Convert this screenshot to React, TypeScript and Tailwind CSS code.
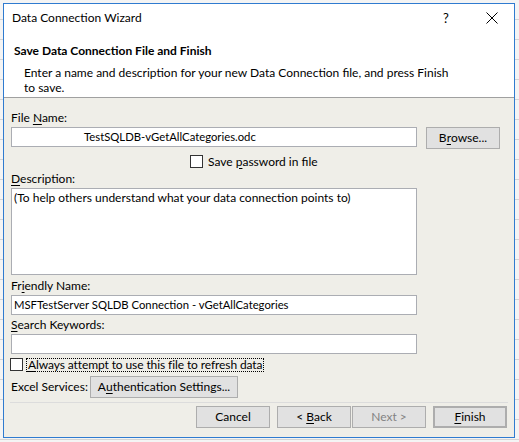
import React from "react";

const U = ({ children }: { children: React.ReactNode }) => <span className="underline underline-offset-2">{children}</span>;

function Btn({ children, className = "", disabled = false }: { children: React.ReactNode; className?: string; disabled?: boolean }) {
  return (
    <div
      className={
        "flex h-[22px] items-center justify-center whitespace-pre border border-[#adadad] bg-[#e1e1e1] " +
        (disabled ? "text-[#838383] " : "text-black ") +
        className
      }
    >
      {children}
    </div>
  );
}

function Check() {
  return <div className="h-[13px] w-[13px] shrink-0 border border-[#333333] bg-white" />;
}

export default function App() {
  return (
    <div className="h-[442px] w-[519px] overflow-hidden bg-[#f4f4f4] bg-[repeating-linear-gradient(to_bottom,transparent_0px,transparent_19px,#d4d4d4_19px,#d4d4d4_20px)] font-['Lato',sans-serif] text-[12px] leading-[16px] text-black">
      <div className="ml-[3px] mt-[3px] flex h-[435px] w-[512px] flex-col border border-[#2f7bd0] bg-[#efeee8]">
        {/* header */}
        <div className="flex h-[93px] flex-col bg-white">
          <div className="flex h-[28px] items-center pl-[8px]">
            <span className="flex-1">Data Connection Wizard</span>
            <span className="w-[20px] text-center text-[13px]">?</span>
            <svg className="ml-[30px] mr-[16px]" width="12" height="12" viewBox="0 0 12 12">
              <path d="M0.5 0.5 L11.5 11.5 M11.5 0.5 L0.5 11.5" stroke="#000" strokeWidth="1" />
            </svg>
          </div>
          <div className="mt-[11px] pl-[10px] font-bold">Save Data Connection File and Finish</div>
          <div className="mt-[6px] whitespace-nowrap pl-[20px] leading-[15px]">
            Enter a name and description for your new Data Connection file, and press Finish
            <br />
            to save.
          </div>
        </div>
        <div className="h-px bg-[#a0a0a0]" />
        {/* body */}
        <div className="flex flex-1 flex-col px-[7px]">
          <div className="mt-[12px] h-[16px]">
            File <U>N</U>ame:
          </div>
          <div className="mt-px flex h-[22px] items-start">
            <div className="flex h-[20px] w-[406px] items-center border border-[#abadb3] bg-white pl-[72px] text-[11.3px]">
              TestSQLDB-vGetAllCategories.odc
            </div>
            <Btn className="ml-[9px] w-[74px]">
              B<U>r</U>owse...
            </Btn>
          </div>
          <div className="mt-[6px] flex h-[13px] items-center pl-[179px]">
            <Check />
            <span className="ml-[5px]">
              Save <U>p</U>assword in file
            </span>
          </div>
          <div className="mt-[3px] h-[16px]">
            <U>D</U>escription:
          </div>
          <div className="mt-px h-[87px] w-[406px] border border-[#abadb3] bg-white px-[2px] pt-[1px]">
            (To help others understand what your data connection points to)
          </div>
          <div className="mt-[3px] h-[16px]">
            Fr<U>i</U>endly Name:
          </div>
          <div className="mt-px flex h-[20px] w-[406px] items-center border border-[#abadb3] bg-white pl-[2px] text-[11.3px]">
            MSFTestServer SQLDB Connection - vGetAllCategories
          </div>
          <div className="mt-[2px] h-[16px]">
            <U>S</U>earch Keywords:
          </div>
          <div className="mt-px h-[20px] w-[406px] border border-[#abadb3] bg-white" />
          <div className="-ml-px mt-[4px] flex h-[13px] items-center">
            <Check />
            <span className="ml-[3px] flex h-[14px] items-center border border-dotted border-black pl-px pr-px tracking-[-0.1px]">
              <U>A</U>lways attempt to use this file to refresh data
            </span>
          </div>
          <div className="mt-[5px] flex h-[22px] items-center">
            <span className="w-[79px] whitespace-nowrap">Excel Services:</span>
            <Btn className="w-[148px]">
              A<U>u</U>thentication Settings...
            </Btn>
          </div>
          <div className="-ml-px mt-[4px] h-px w-[498px] bg-[#dcdcdc]" />
          <div className="mt-[3px] flex h-[22px] justify-end">
            <Btn className="w-[74px]">Cancel</Btn>
            <Btn className="ml-[7px] w-[74px]">
              {"< "}
              <U>B</U>ack
            </Btn>
            <Btn className="ml-px w-[74px]" disabled>
              {"Next >"}
            </Btn>
            <Btn className="ml-[7px] w-[74px] border-2 border-[#0078d7]">
              <U>F</U>inish
            </Btn>
          </div>
        </div>
      </div>
    </div>
  );
}
